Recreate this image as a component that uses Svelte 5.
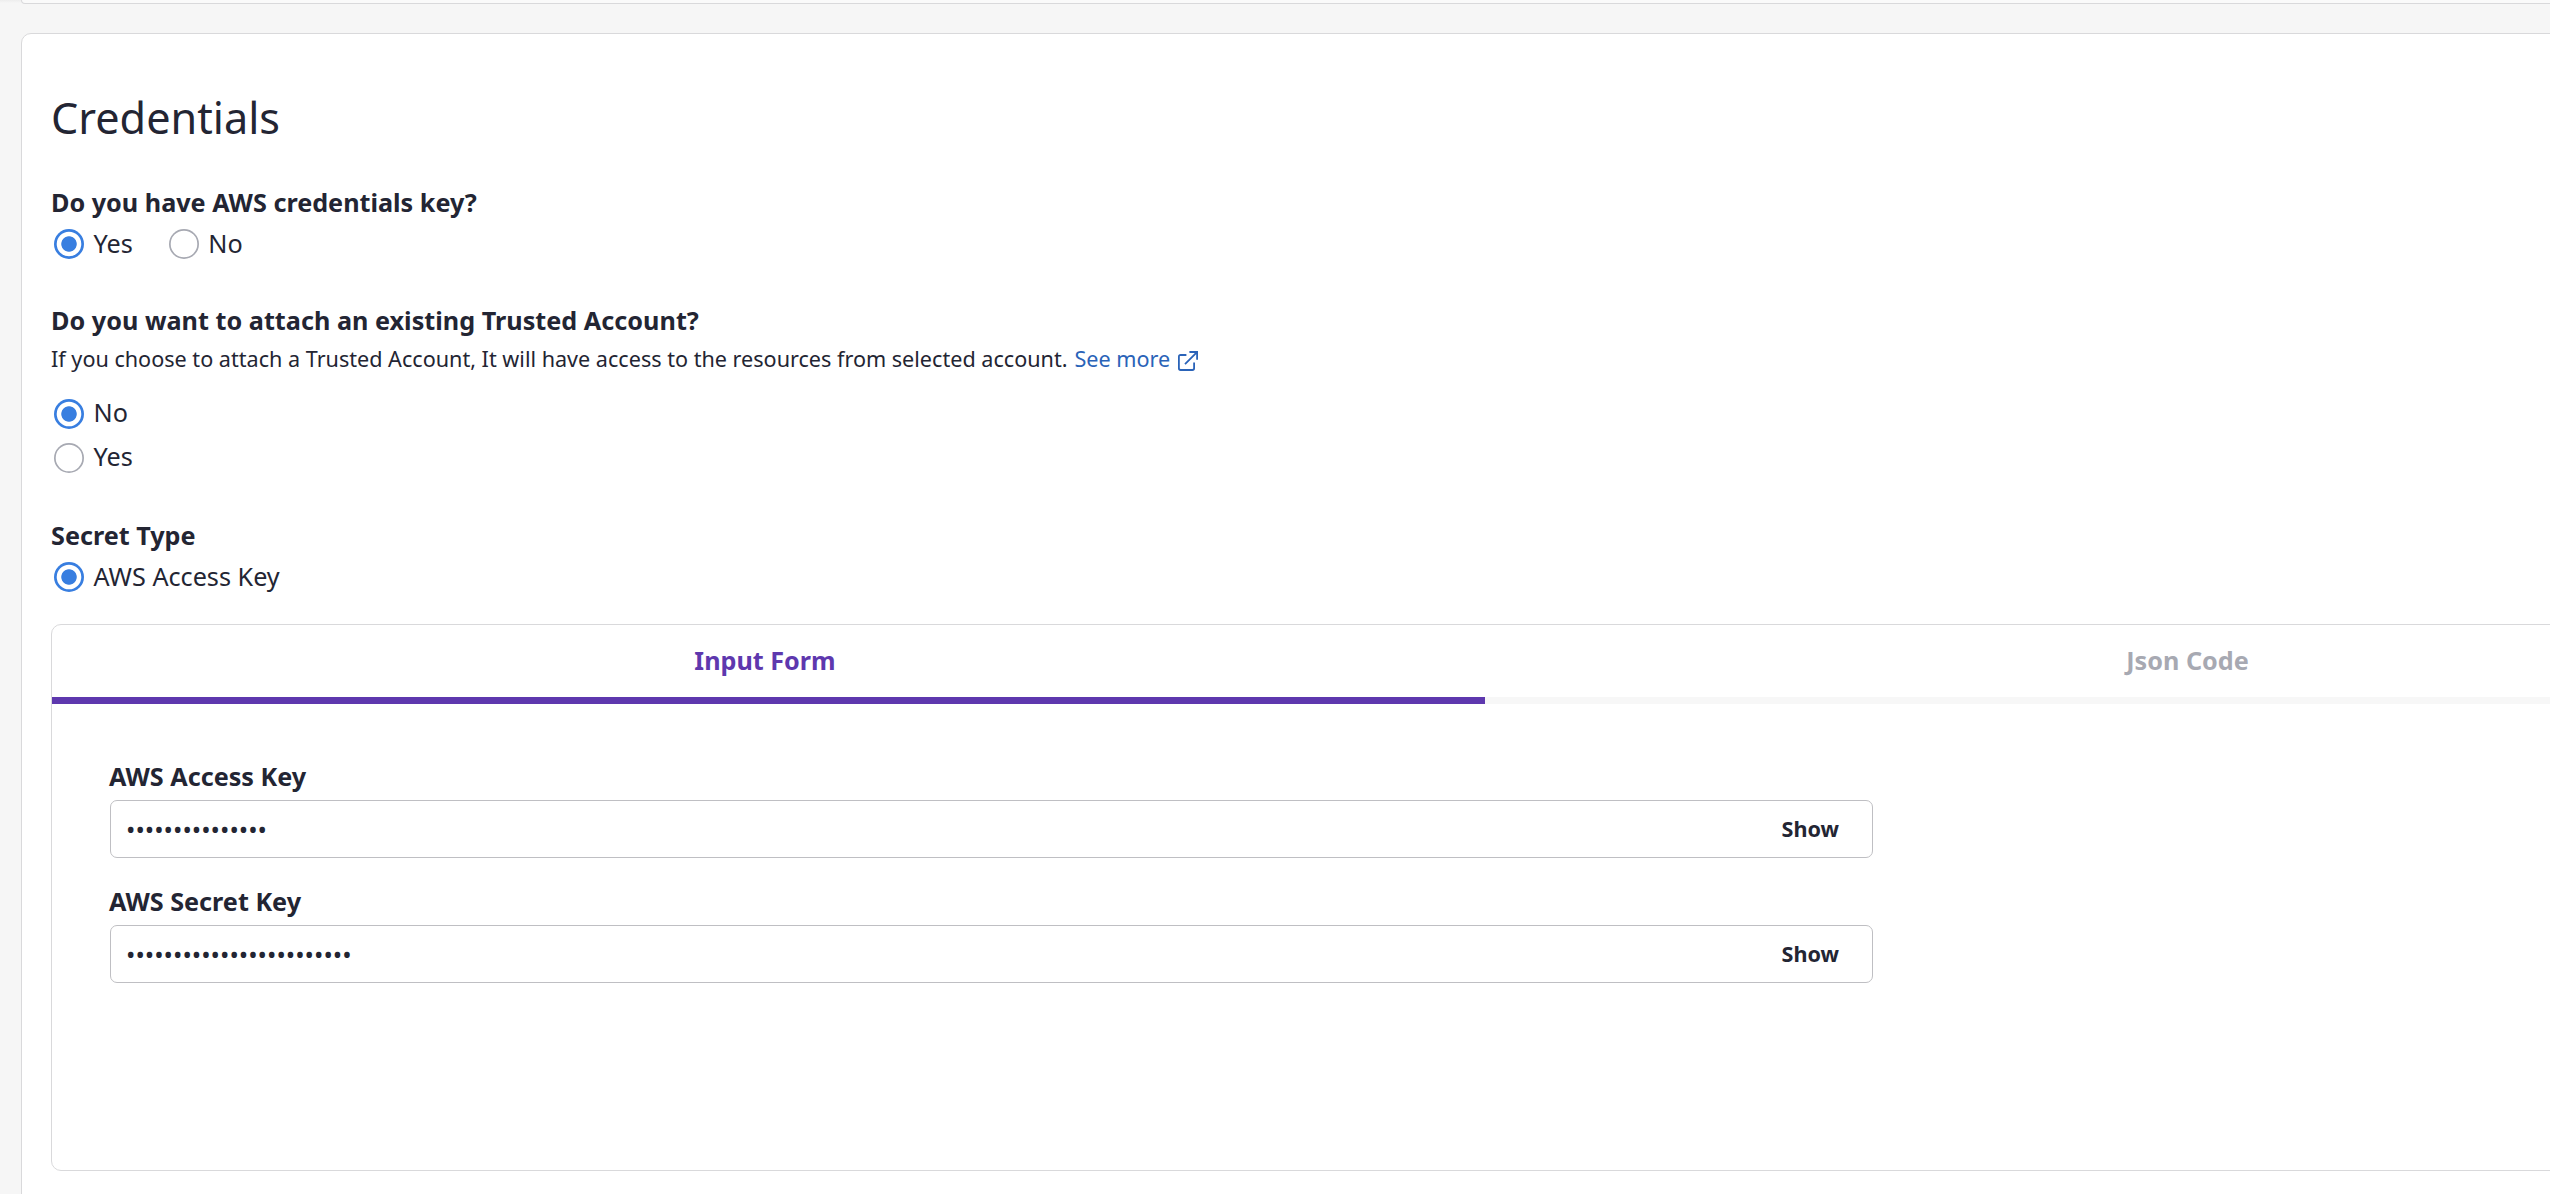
<script>
  let hasKey = $state('Yes');
  let attach = $state('No');
  const fields = [
    { label: 'AWS Access Key', length: 15 },
    { label: 'AWS Secret Key', length: 24 }
  ];
</script>

{#snippet radio(label, checked, select)}
  <button class="radio" class:checked role="radio" aria-checked={checked} onclick={select}>
    <span class="ring"></span>
    <span class="radio-text">{label}</span>
  </button>
{/snippet}

<main>
  <div class="previous"></div>
  <section class="card">
    <h1>Credentials</h1>

    <h2 class="first">Do you have AWS credentials key?</h2>
    <div class="row">
      {@render radio('Yes', hasKey === 'Yes', () => (hasKey = 'Yes'))}
      {@render radio('No', hasKey === 'No', () => (hasKey = 'No'))}
    </div>

    <h2 class="attach-title">Do you want to attach an existing Trusted Account?</h2>
    <p class="hint">
      <span class="desc">If you choose to attach a Trusted Account, It will have access to the resources from selected account.</span>
      <span class="link">See more</span>
      <svg class="external" viewBox="0 0 20 20" fill="none" stroke="currentColor" stroke-width="1.8">
        <path d="M8.4 4H2.6Q.9 4 .9 5.7V17.3Q.9 19 2.6 19H14.4Q16.1 19 16.1 17.3V11.4" />
        <path d="M7 13.2L19 1.2M11.4 1H19.1V8.8" />
      </svg>
    </p>
    <div class="column">
      {@render radio('No', attach === 'No', () => (attach = 'No'))}
      {@render radio('Yes', attach === 'Yes', () => (attach = 'Yes'))}
    </div>

    <h2 class="secret-title">Secret Type</h2>
    <div class="row secret">
      {@render radio('AWS Access Key', true, () => {})}
    </div>

    <div class="panel">
      <div class="tabs">
        <div class="tab active"><span>Input Form</span></div>
        <div class="tab"><span>Json Code</span></div>
      </div>
      <div class="fields">
        {#each fields as field}
          <div class="field">
            <h3>{field.label}</h3>
            <div class="input">
              <span class="dots">{'•'.repeat(field.length)}</span>
              <span class="show">Show</span>
            </div>
          </div>
        {/each}
      </div>
    </div>
  </section>
</main>

<style>
  :global(body) { overflow: hidden; }
  main {
    box-sizing: border-box;
    width: 2550px;
    height: 1194px;
    overflow: hidden;
    background: linear-gradient(#ededed, #f6f6f6 3px);
    font-family: 'Noto Sans', sans-serif;
    font-size: 25.2px;
    line-height: 36px;
    color: #232533;
    white-space: nowrap;
  }
  .previous {
    box-sizing: border-box;
    width: 2920px;
    height: 4px;
    margin-left: 21px;
    border: 1px solid #d9d9db;
    border-top: 0;
    border-radius: 0 0 10px 10px;
    background: #fafafa;
  }
  .card {
    box-sizing: border-box;
    width: 2920px;
    height: 1400px;
    margin: 29px 0 0 21px;
    padding: 54px 29px 53px;
    border: 1px solid #d9d9db;
    border-radius: 10px;
    background: #fff;
  }
  h1, h2, h3, p { margin: 0; }
  h1 { font-size: 43.2px; line-height: 60px; font-weight: 400; }
  h2 { margin-top: 43px; font-size: 25.2px; font-weight: 700; line-height: 36px; }
  h2.first { margin-top: 36px; }
  h2.attach-title { letter-spacing: 0.02px; }
  h2.secret-title { margin-top: 44px; }
  h3 { margin-left: -1px; font-size: 25.2px; font-weight: 700; line-height: 36px; }
  .row { display: flex; gap: 36px; margin-top: 9px; padding-left: 3px; }
  .column {
    display: flex;
    flex-direction: column;
    gap: 14px;
    margin-top: 25px;
    padding-left: 3px;
    align-items: flex-start;
  }
  .radio {
    display: flex;
    align-items: center;
    gap: 9.5px;
    height: 30px;
    padding: 0;
    border: 0;
    background: none;
    color: inherit;
    font: inherit;
  }
  .radio-text { margin-top: -2px; }
  .column .radio-text { margin-top: -4px; }
  .ring {
    width: 30px;
    height: 30px;
    border-radius: 50%;
    box-shadow: inset 0 0 0 1.7px #a7a9b2;
  }
  .checked .ring {
    background: radial-gradient(circle, #387ee0 7.3px, #fff 8.1px);
    box-shadow: inset 0 0 0 2.7px #387ee0;
  }
  .hint {
    display: flex;
    align-items: center;
    height: 30px;
    margin-top: 6px;
    font-size: 21.6px;
    line-height: 30px;
  }
  .link { margin-left: 7px; color: #2a63b8; }
  .external { width: 20px; height: 20px; margin: 3px 0 0 8px; color: #2a63b8; }
  .panel {
    box-sizing: border-box;
    width: 2840px;
    height: 547px;
    margin-top: 32px;
    border: 1px solid #d9d9db;
    border-radius: 10px;
  }
  .tabs { display: flex; }
  .tab {
    flex: none;
    box-sizing: border-box;
    width: 1405px;
    height: 79px;
    padding-top: 17px;
    border-bottom: 7px solid #f7f7f7;
    text-align: center;
    font-weight: 700;
    color: #a7a9b2;
  }
  .tab.active {
    width: 1433px;
    padding-right: 7px;
    border-color: #5e38ae;
    color: #5e38ae;
  }
  .fields { display: flex; flex-direction: column; gap: 25px; padding: 54px 0 0 58px; }
  .input {
    box-sizing: border-box;
    display: flex;
    align-items: center;
    justify-content: space-between;
    width: 1763px;
    height: 58px;
    margin-top: 6px;
    padding: 0 33px 0 15px;
    border: 1px solid #bfbfc3;
    border-radius: 7px;
  }
  .dots { font-size: 25px; }
  .show { margin-top: -1px; font-size: 21.6px; font-weight: 700; }
</style>
